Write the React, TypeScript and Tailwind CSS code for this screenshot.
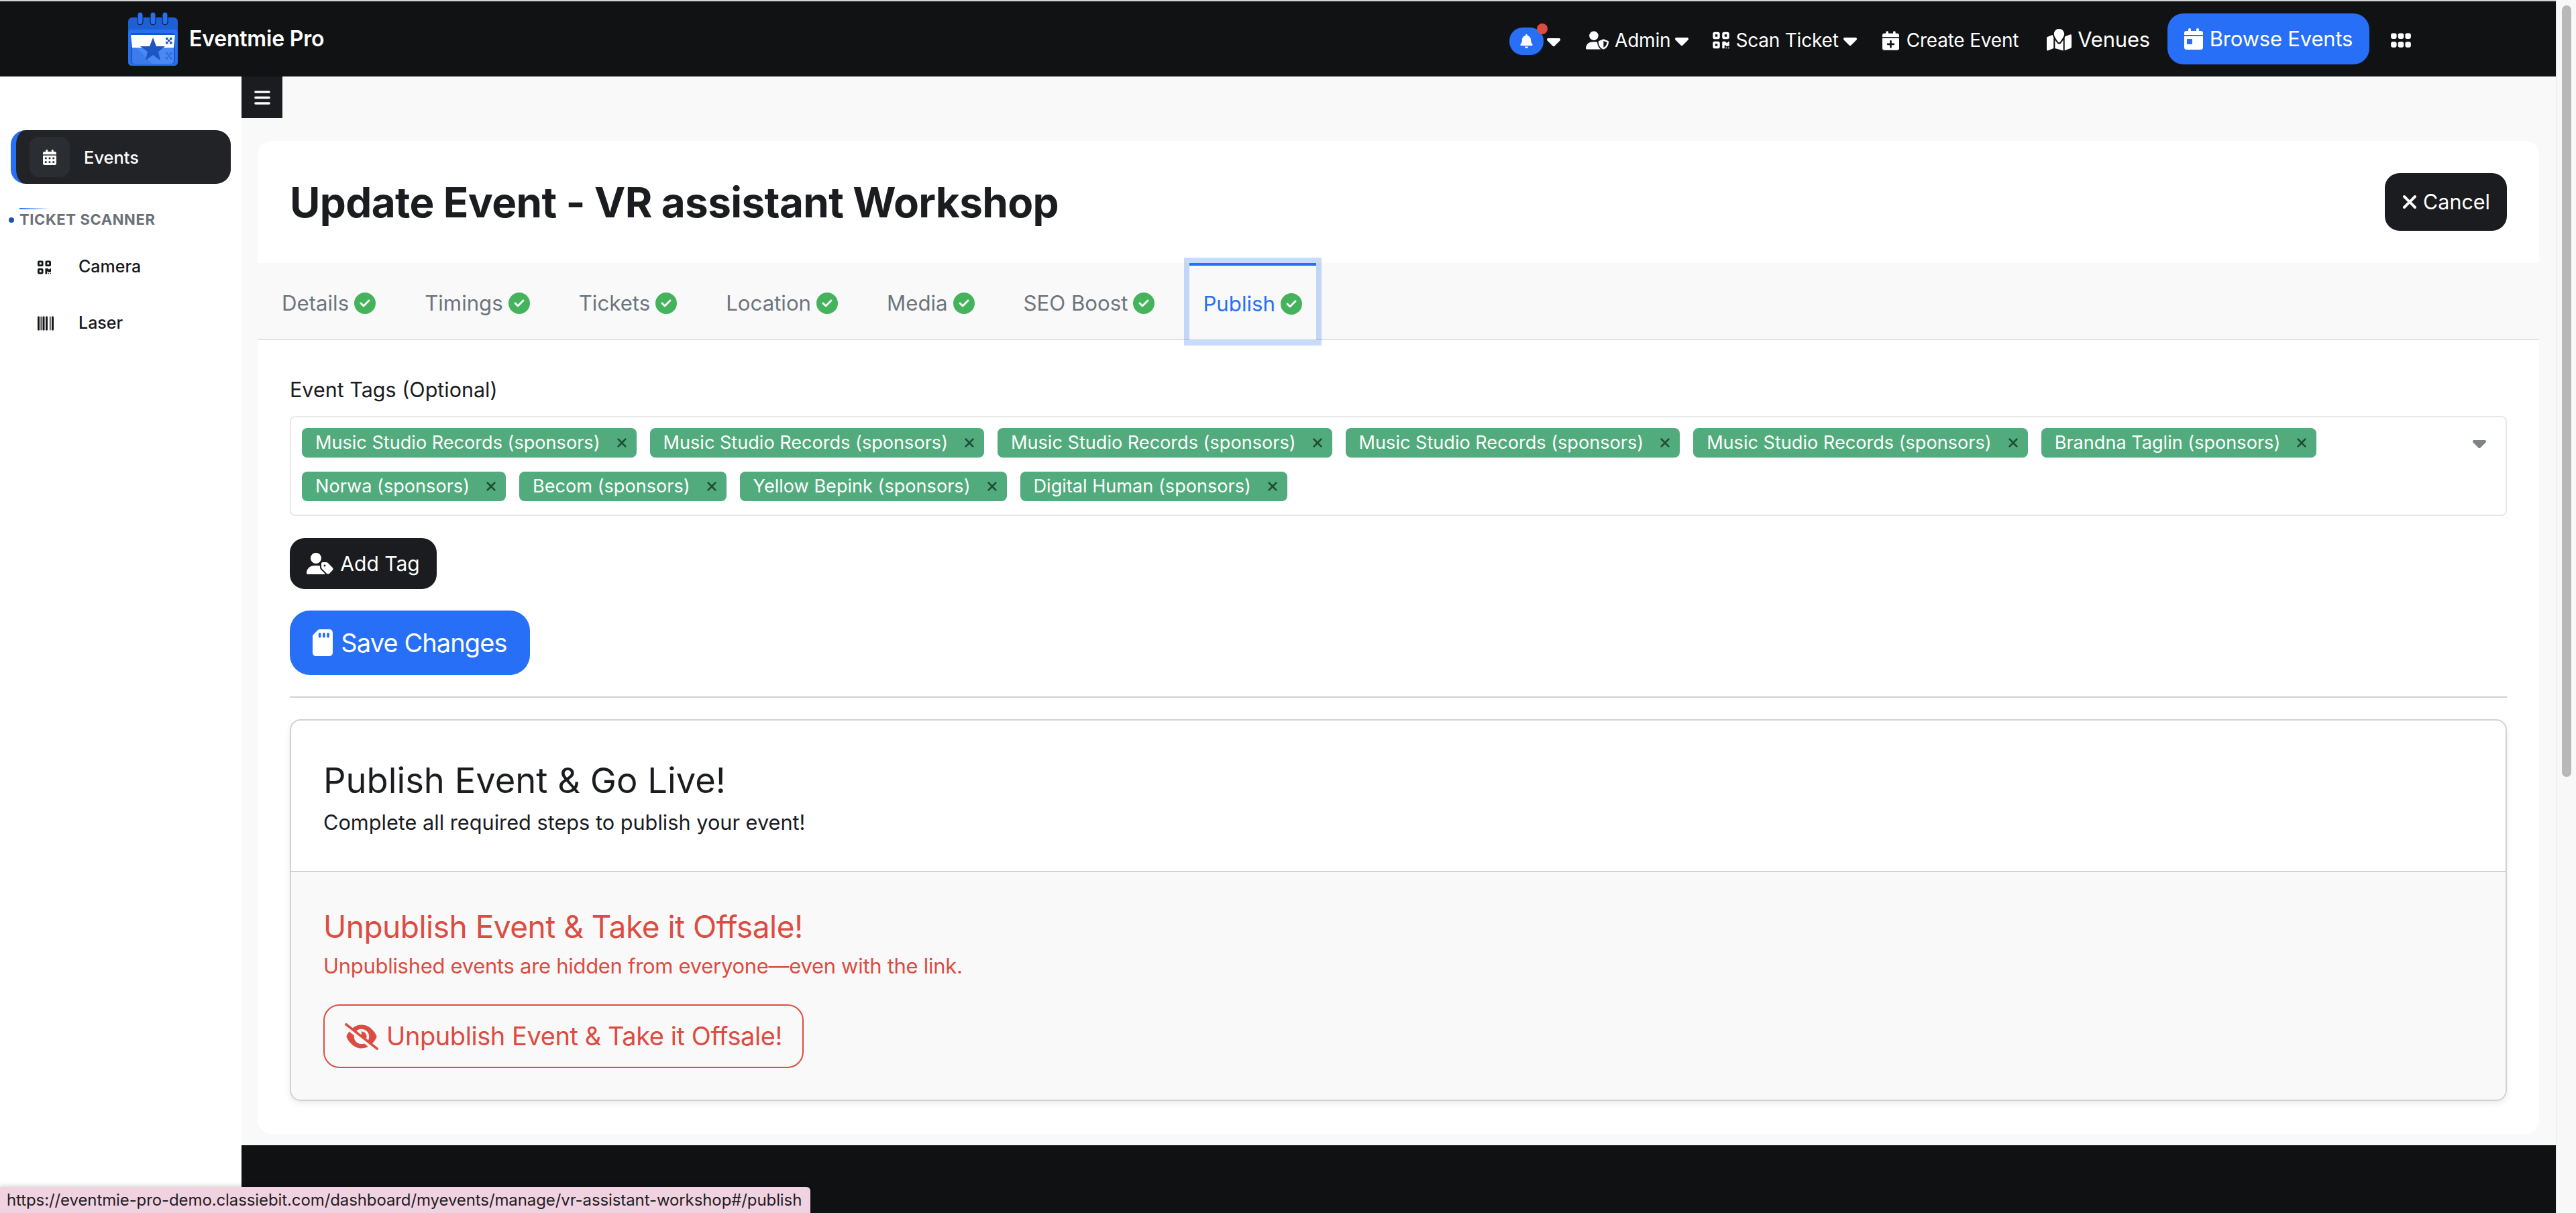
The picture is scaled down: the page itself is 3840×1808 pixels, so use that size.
import {
  FaBars,
  FaBarcode,
  FaBell,
  FaCalendarDay,
  FaCalendarDays,
  FaCalendarPlus,
  FaCaretDown,
  FaCircleCheck,
  FaEyeSlash,
  FaGrip,
  FaMapLocation,
  FaQrcode,
  FaSdCard,
  FaUserShield,
  FaUserTag,
  FaXmark,
} from "react-icons/fa6"

const tabs = ["Details", "Timings", "Tickets", "Location", "Media", "SEO Boost"]

const tags = [
  "Music Studio Records (sponsors)",
  "Music Studio Records (sponsors)",
  "Music Studio Records (sponsors)",
  "Music Studio Records (sponsors)",
  "Music Studio Records (sponsors)",
  "Brandna Taglin (sponsors)",
  "Norwa (sponsors)",
  "Becom (sponsors)",
  "Yellow Bepink (sponsors)",
  "Digital Human (sponsors)",
]

function Logo() {
  return (
    <svg viewBox="0 0 74 80" className="h-[80px] w-[74px]">
      <path d="M6 8h62a6 6 0 0 1 6 6v60a6 6 0 0 1-6 6H6a6 6 0 0 1-6-6V14a6 6 0 0 1 6-6z" fill="#1f5fd6" />
      <rect x="0" y="26" width="74" height="54" rx="5" fill="#256ff0" />
      <rect x="4" y="31" width="66" height="46" rx="4" fill="#1c56c4" />
      <rect x="14" y="0" width="8" height="19" rx="4" fill="#256ff0" stroke="#10151f" strokeWidth="1" />
      <rect x="33" y="0" width="8" height="19" rx="4" fill="#256ff0" stroke="#10151f" strokeWidth="1" />
      <rect x="51" y="0" width="8" height="19" rx="4" fill="#256ff0" stroke="#10151f" strokeWidth="1" />
      <path d="M4 34h66l-2 19H6z" fill="#ffffff" />
      <path d="M6 53h62v20a4 4 0 0 1-4 4H10a4 4 0 0 1-4-4z" fill="#4a88f2" />
      <path d="M6 53h6l24 24H10a4 4 0 0 1-4-4z" fill="#3b7bea" />
      <path d="M37 38l5 13h13l-10 8 3 13-11-8-11 8 3-13-11-8h14z" fill="#1c56c4" />
      <g fill="#1c56c4">
        <rect x="56" y="38" width="3.500" height="3.500" />
        <rect x="62" y="38" width="3.500" height="3.500" />
        <rect x="56" y="44" width="3.500" height="3.500" />
        <rect x="62" y="44" width="3.500" height="3.500" />
        <rect x="59" y="41" width="3.500" height="3" />
      </g>
      <g fill="#2e6fe0">
        <rect x="56" y="60" width="3.500" height="3.500" />
        <rect x="62" y="60" width="3.500" height="3.500" />
        <rect x="56" y="67" width="3.500" height="3.500" />
        <rect x="62" y="67" width="3.500" height="3.500" />
        <rect x="59" y="63" width="3.500" height="4" />
      </g>
    </svg>
  )
}

function Caret() {
  return <FaCaretDown className="h-[32px] w-[20px]" />
}

function NavBar() {
  return (
    <header className="flex h-[112px] shrink-0 items-center bg-[#101214] text-white">
      <div className="ml-[191px] flex items-center gap-[17px]">
        <Logo />
        <span className="text-[32px] font-semibold tracking-[-0.2px]">Eventmie Pro</span>
      </div>
      <nav className="ml-auto mr-[216px] flex items-center text-[28px] tracking-[-0.2px]">
        <div className="relative mt-[6px] flex items-center gap-[5px]">
          <span className="flex h-[41px] w-[51px] items-center justify-center rounded-[20px] bg-[#266ff6]">
            <FaBell className="h-[21px] w-[19px]" />
          </span>
          <span className="absolute left-[41px] top-[-6px] h-[16px] w-[16px] rounded-full bg-[#dc4c42]" />
          <Caret />
        </div>
        <div className="ml-[38px] mt-[4px] flex items-center gap-[9px]">
          <FaUserShield className="h-[34px] w-[34px]" />
          <span>Admin</span>
          <div className="-ml-[2px]">
            <Caret />
          </div>
        </div>
        <div className="ml-[36px] mt-[4px] flex items-center gap-[9px]">
          <FaQrcode className="h-[28px] w-[25px]" />
          <span>Scan Ticket</span>
          <div className="-ml-[2px]">
            <Caret />
          </div>
        </div>
        <div className="ml-[38px] mt-[4px] flex items-center gap-[11px]">
          <FaCalendarPlus className="h-[29px] w-[25px]" />
          <span>Create Event</span>
        </div>
        <div className="ml-[42px] mt-[2px] flex items-center gap-[9px]">
          <FaMapLocation className="h-[37px] w-[37px]" />
          <span className="text-[31px]">Venues</span>
        </div>
        <a className="ml-[26px] flex h-[76px] w-[301px] items-center justify-center gap-[10px] rounded-[24px] bg-[#266ff6] text-[31px]">
          <FaCalendarDay className="h-[32px] w-[28px]" />
          <span>Browse Events</span>
        </a>
        <FaGrip className="ml-[32px] mt-[3px] h-[34px] w-[30px]" />
      </nav>
    </header>
  )
}

function SideBar() {
  return (
    <aside className="w-[360px] shrink-0 bg-white pl-[16px] pr-[16px] pt-[80px]">
      <div className="flex h-[80px] items-center rounded-[22px] border-l-[8px] border-[#266ff6] bg-[#212327] pl-[20px] text-white">
        <span className="flex h-[60px] w-[60px] items-center justify-center rounded-[14px] bg-[#2a2d31]">
          <FaCalendarDays className="h-[23px] w-[20px]" />
        </span>
        <span className="ml-[21px] pt-[2px] text-[25.500px] font-medium">Events</span>
      </div>
      <div className="relative -ml-[3px] mt-[37px] flex items-center gap-[8px]">
        <span className="absolute left-[16px] top-[-1px] h-[2px] w-[46px] bg-gradient-to-r from-[#266ff6] to-transparent" />
        <span className="h-[8px] w-[8px] rounded-full bg-[#1f54b4]" />
        <span className="text-[22px] font-bold tracking-[0.6px] text-[#6b7178]">TICKET SCANNER</span>
      </div>
      <div className="mt-[24px] flex h-[60px] items-center pl-[40px] text-[25px] font-medium text-[#15171a]">
        <FaQrcode className="h-[23px] w-[20px]" />
        <span className="ml-[41px]">Camera</span>
      </div>
      <div className="mt-[24px] flex h-[60px] items-center pl-[40px] text-[25px] font-medium text-[#15171a]">
        <FaBarcode className="h-[24px] w-[24px]" />
        <span className="ml-[37px]">Laser</span>
      </div>
    </aside>
  )
}

function TabBar() {
  return (
    <div className="flex h-[115px] items-stretch gap-[33px] border-b-2 border-[#dee2e6] bg-[#f9f9f9] pl-[16px] text-[31.200px] text-[#6c757d]">
      {tabs.map((tab) => (
        <div key={tab} className="flex items-center gap-[8px] px-[20px] pt-[7px]">
          <span>{tab}</span>
          <FaCircleCheck className="h-[32px] w-[32px] text-[#45b35c]" />
        </div>
      ))}
      <div className="-mb-[2px] -ml-[1px] flex w-[189px] items-center gap-[8px] border-t-4 border-[#266ff6] px-[20px] pt-[3px] text-[#266ff6] outline-8 outline-[#266ff640]">
        <span>Publish</span>
        <FaCircleCheck className="h-[32px] w-[32px] text-[#45b35c]" />
      </div>
    </div>
  )
}

function TagPicker() {
  return (
    <div className="relative mt-[19px] flex h-[149px] flex-wrap content-start gap-x-[20px] gap-y-[21px] rounded-[8px] border-2 border-[#e6e8ea] pl-[16px] pr-[80px] pt-[16px]">
      {tags.map((tag, i) => (
        <span
          key={i}
          className="flex h-[44px] items-center gap-[24px] rounded-[8px] bg-[#52ab7c] pl-[20px] pr-[14px] text-[27.100px] text-white"
        >
          {tag}
          <FaXmark className="h-[24px] w-[16px] text-[#1f4d35]" />
        </span>
      ))}
      <FaCaretDown className="absolute right-[29px] top-[22px] h-[32px] w-[20px] text-[#808488]" />
    </div>
  )
}

function PublishBox() {
  return (
    <div className="mt-[32px] rounded-[16px] border-2 border-[#cfd1d3] shadow-[0_4px_8px_rgba(0,0,0,0.08)]">
      <div className="h-[226px] border-b-2 border-[#cfd1d3] px-[48px] pt-[57px] text-[#1a1c1f]">
        <h2 className="text-[52.500px] leading-[64px]">Publish Event &amp; Go Live!</h2>
        <p className="mt-[11px] text-[30.700px] leading-[40px]">Complete all required steps to publish your event!</p>
      </div>
      <div className="h-[339px] rounded-b-[16px] bg-[#f9f9f9] px-[48px] pt-[52px] text-[#dc4c42]">
        <h3 className="text-[46px] leading-[58px] tracking-[-0.5px]">Unpublish Event &amp; Take it Offsale!</h3>
        <p className="mt-[10px] text-[31px] leading-[40px] tracking-[-0.3px]">
          Unpublished events are hidden from everyone—even with the link.
        </p>
        <button className="mt-[37px] flex h-[95px] w-[716px] items-center justify-center gap-[12px] rounded-[24px] border-2 border-[#dc4c42] text-[38px] tracking-[-0.43px]">
          <FaEyeSlash className="h-[50px] w-[50px]" />
          Unpublish Event &amp; Take it Offsale!
        </button>
      </div>
    </div>
  )
}

export default function App() {
  return (
    <div className="relative flex h-[1808px] w-full overflow-hidden bg-white font-['Inter',sans-serif]">
      <div className="flex min-w-0 flex-1 flex-col">
        <div className="h-[2px] shrink-0 bg-[#d4d4d4]" />
        <NavBar />
        <div className="flex min-h-0 flex-1">
          <SideBar />
          <main className="flex min-w-0 flex-1 flex-col bg-[#f9f9f9]">
            <button className="flex h-[62px] w-[61px] shrink-0 items-center justify-center bg-[#1a1c1f] text-white">
              <FaBars className="h-[27px] w-[24px]" />
            </button>
            <section className="ml-[24px] mr-[25px] mt-[34px] h-[1480px] shrink-0 rounded-[20px] bg-white">
              <div className="flex h-[182px] items-center justify-between px-[48px]">
                <h1 className="text-[62px] font-bold tracking-[-0.64px] text-[#1a1c1f]">
                  Update Event - VR assistant Workshop
                </h1>
                <button className="flex h-[86px] w-[182px] items-center justify-center gap-[8px] rounded-[22px] bg-[#1a1c1f] text-[30.500px] text-white">
                  <FaXmark className="h-[32px] w-[24px]" />
                  Cancel
                </button>
              </div>
              <TabBar />
              <div className="px-[48px] pt-[54px]">
                <label className="block text-[30.500px] leading-[40px] text-[#1a1c1f]">Event Tags (Optional)</label>
                <TagPicker />
                <button className="mt-[33px] flex h-[76px] w-[219px] items-center justify-center gap-[10px] rounded-[22px] bg-[#1a1c1f] text-[30px] text-white">
                  <FaUserTag className="h-[40px] w-[40px]" />
                  Add Tag
                </button>
                <button className="mt-[32px] flex h-[96px] w-[358px] items-center justify-center gap-[12px] rounded-[30px] bg-[#266ff6] text-[38px] tracking-[-0.9px] text-white">
                  <FaSdCard className="h-[40px] w-[30px]" />
                  Save Changes
                </button>
                <hr className="mt-[32px] border-t-[2px] border-[#cfd1d3]" />
                <PublishBox />
              </div>
            </section>
            <footer className="mt-[17px] flex-1 bg-[#0f1113]" />
          </main>
        </div>
      </div>
      <div className="flex w-[30px] shrink-0 justify-center border-l border-[#e8e8e8] bg-[#f8f8f8] pt-[8px]">
        <div className="h-[1150px] w-[14px] rounded-full bg-[#b8b8b8]" />
      </div>
      <div className="absolute bottom-0 left-0 flex h-[39px] w-[1208px] items-center rounded-tr-[6px] bg-[#f0d2e1] pl-[10px] text-[24px] tracking-[-0.1px] text-[#1f1f1f] shadow-[0_-2px_6px_rgba(0,0,0,0.15)]">
        https://eventmie-pro-demo.classiebit.com/dashboard/myevents/manage/vr-assistant-workshop#/publish
      </div>
    </div>
  )
}
